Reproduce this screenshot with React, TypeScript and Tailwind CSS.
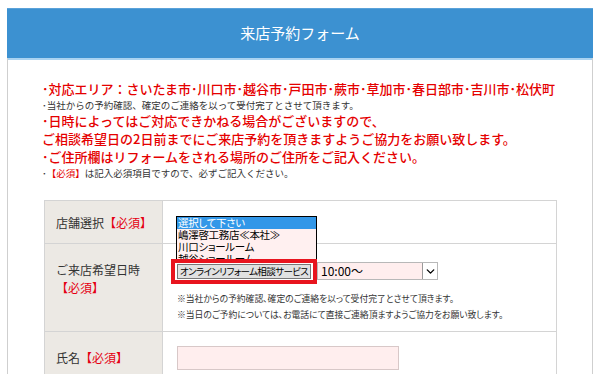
import { ChevronDown } from 'lucide-react'

const STORES = ['選択して下さい', '嶋澤啓工務店≪本社≫', '川口ショールーム', '越谷ショールーム']

const Required = () => <span className="text-[#e50012]">【必須】</span>

export default function App() {
  return (
    <div className="h-[374px] overflow-hidden bg-white pt-2 px-[7px] font-['Noto_Sans_CJK_JP',sans-serif] text-[#333]">
      <div className="min-h-[366px] border-x border-[#cfcfcf]">
        {/* Header */}
        <div className="-mx-px h-[50px] bg-[#3c91d1] border-t border-[#5aa2d9] flex items-center justify-center text-white text-[15px]">
          来店予約フォーム
        </div>
        <div className="h-[2px] bg-[#aad3f1]" />

        <div className="pl-[34px] pt-5">
          {/* Notes */}
          <div className="text-[#e50000]">
            <p className="text-[13px] leading-[18px] font-medium whitespace-nowrap">
              ･対応エリア：さいたま市･川口市･越谷市･戸田市･蕨市･草加市･春日部市･吉川市･松伏町
            </p>
            <p className="text-[9.5px] leading-[14px] text-[#333]">･当社からの予約確認、確定のご連絡を以って受付完了とさせて頂きます。</p>
            <p className="text-[13px] leading-[18px] font-medium">･日時によってはご対応できかねる場合がございますので、</p>
            <p className="text-[13px] leading-[18px] font-medium">ご相談希望日の2日前までにご来店予約を頂きますようご協力をお願い致します。</p>
            <p className="text-[13px] leading-[18px] font-medium">･ご住所欄はリフォームをされる場所のご住所をご記入ください。</p>
            <p className="text-[9.5px] leading-[14px] text-[#333]">
              ･<span className="text-[#e50000]">【必須】</span>は記入必須項目ですので、必ずご記入ください。
            </p>
          </div>

          {/* Form table */}
          <table className="mt-5 ml-[2px] w-[513px] border-collapse text-[12px] leading-[18px]">
            <tbody>
              <tr>
                <th className="h-[43px] w-[118px] border border-[#d4d4d4] bg-[#ece9e4] pl-[11px] pt-[2px] text-left font-normal">
                  店舗選択<Required />
                </th>
                <td className="relative h-[43px] border border-[#d4d4d4]">
                  <div className="absolute left-[13px] top-[15px] z-10 h-[48px] w-[141px] overflow-hidden border border-black bg-[#fff0f0] text-[10.5px] leading-[12px] tracking-[-0.3px] text-black [font-feature-settings:'palt']">
                    {STORES.map((s, i) => (
                      <div key={s} className={i === 0 ? 'whitespace-nowrap bg-[#3297e8] px-px text-white' : 'whitespace-nowrap px-px'}>
                        {s}
                      </div>
                    ))}
                  </div>
                </td>
              </tr>

              <tr>
                <th className="h-[88px] border border-[#d4d4d4] bg-[#ece9e4] pl-[11px] pt-[17px] text-left align-top font-normal">
                  ご来店希望日時
                  <br />
                  <Required />
                </th>
                <td className="relative h-[88px] border border-[#d4d4d4] pl-[14px] pt-[17px] align-top">
                  <div className="flex h-[23px] items-start">
                    <div className="h-[23px] w-[114px] border border-[#d8c8c8] bg-[#ffeeee]" />
                    <div className="ml-[26px] mt-px flex h-[18px] w-[121px] items-center border border-[#b8b8b8] bg-[#ffeeee]">
                      <span className="flex-1 pl-[3px] text-[12px] leading-[16px] text-black">10:00～</span>
                      <span className="flex h-full w-[15px] items-center justify-center border-l border-[#9a9a9a] bg-white">
                        <ChevronDown size={13} strokeWidth={2.5} className="text-black" />
                      </span>
                    </div>
                  </div>
                  <div className="mt-[7px] h-[32px] text-[8.8px] leading-[16px] [font-feature-settings:'palt']">
                    <p className="whitespace-nowrap">※当社からの予約確認、確定のご連絡を以って受付完了とさせて頂きます。</p>
                    <p className="whitespace-nowrap">※当日のご予約については、お電話にて直接ご連絡頂ますようご協力をお願い致します。</p>
                  </div>

                  {/* highlighted option */}
                  <div className="absolute left-[8px] top-[15px] z-20 h-[25px] w-[146px] border-[4px] border-[#e8141e] bg-white px-[2px] pt-px">
                    <div className="whitespace-nowrap border border-[#777] bg-[#e1e1e1] pl-[2px] text-[9.5px] leading-[13px] tracking-[-0.6px] text-black [font-feature-settings:'palt']">
                      オンラインリフォーム相談サービス
                    </div>
                  </div>
                </td>
              </tr>

              <tr>
                <th className="h-[52px] border border-[#d4d4d4] bg-[#ece9e4] pl-[11px] text-left font-normal">
                  氏名<Required />
                </th>
                <td className="h-[52px] border border-[#d4d4d4] pl-[14px]">
                  <div className="h-[24px] w-[222px] border border-[#d8c8c8] bg-[#ffeeee]" />
                </td>
              </tr>
            </tbody>
          </table>
        </div>
      </div>
    </div>
  )
}
